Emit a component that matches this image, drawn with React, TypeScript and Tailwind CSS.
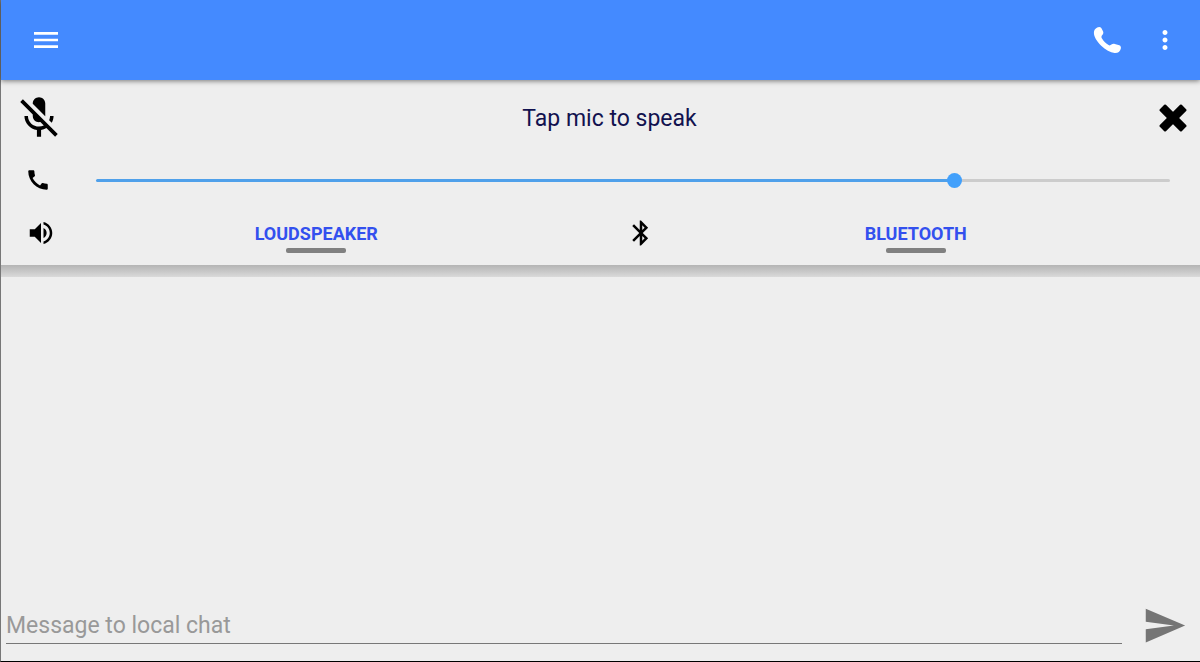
import React, { useState } from "react"
import {
  MdBluetooth,
  MdCall,
  MdMenu,
  MdMicOff,
  MdMoreVert,
  MdSend,
  MdVolumeUp
} from "react-icons/md"

const HandsetIcon = () => (
  <svg width="30" height="30" viewBox="0 0 30 30" fill="currentColor" aria-hidden="true">
    <path d="M5.2 2.6C6.6 1.6 8.4 1.7 9.3 3.1L11 6.2C11.7 7.8 11.3 8.9 10.3 9.9C9.3 11 9.2 12.3 10 13.6C11.6 16.2 14 18.6 16.6 20.1C17.6 20.7 18.6 20.4 19.4 19.6C20.4 18.7 21.6 18.5 22.8 18.9L27.3 20.3C28.8 20.9 29.2 22.2 28.8 23.8C28 26.8 26 28.2 22.6 28C18.4 27.6 13.4 25 9.2 20.8C4.6 16.2 1.9 11.6 1.9 7.8C1.9 5.4 3.2 3.6 5.2 2.6Z" />
  </svg>
)

const CloseIcon = () => (
  <svg width="28" height="28" viewBox="0 0 28 28" aria-hidden="true">
    <rect x="-1.5" y="9.7" width="31" height="8.6" rx="1.2" transform="rotate(45 14 14)" />
    <rect x="-1.5" y="9.7" width="31" height="8.6" rx="1.2" transform="rotate(-45 14 14)" />
  </svg>
)

const OutputToggle = ({ icon, label, active, onToggle }) => (
  <div className="flex flex-1 items-center pl-[25px] pr-6">
    {icon}
    <button
      onClick={onToggle}
      aria-pressed={active}
      className="flex flex-1 flex-col items-center gap-1 pt-2.5 text-lg leading-5 font-bold text-[#3350ee]">
      {label}
      <span
        className={`h-[5px] w-15 rounded-xs ${active ? "bg-[#3350ee]" : "bg-[#808080]"}`}
      />
    </button>
  </div>
)

const App = () => {
  const [volume, setVolume] = useState(804)
  const [loudspeaker, setLoudspeaker] = useState(false)
  const [bluetooth, setBluetooth] = useState(false)
  const [message, setMessage] = useState("")

  const percent = volume / 10

  return (
    <div className="flex min-h-screen flex-col border-b border-l border-b-black border-l-[#777] bg-[#eeeeee] font-[Roboto,sans-serif]">
      <header className="relative z-10 flex h-20 items-center justify-between bg-[#448aff] pl-[29px] pr-5 text-white shadow-[0_1px_5px_rgba(0,0,0,0.5)]">
        <button aria-label="Menu">
          <MdMenu size={32} />
        </button>
        <div className="flex items-center gap-7">
          <button aria-label="Call">
            <HandsetIcon />
          </button>
          <button aria-label="More options">
            <MdMoreVert size={30} />
          </button>
        </div>
      </header>

      <section className="flex flex-col">
        <div className="flex h-[76px] items-center pl-[13px] pr-[13px]">
          <button aria-label="Microphone">
            <MdMicOff size={50} />
          </button>
          <p className="flex-1 pt-0.5 pr-1 text-center text-[23px] text-[#12124f]">
            Tap mic to speak
          </p>
          <button aria-label="Close">
            <CloseIcon />
          </button>
        </div>

        <div className="flex h-12 items-center pl-6 pr-[30px]">
          <label htmlFor="volume" aria-label="Call volume" className="w-[71px]">
            <MdCall size={26} />
          </label>
          <input
            id="volume"
            type="range"
            min="0"
            max="1000"
            value={volume}
            onChange={(e) => setVolume(Number(e.target.value))}
            className="h-[3px] flex-1 appearance-none rounded-full [&::-webkit-slider-thumb]:size-[15px] [&::-webkit-slider-thumb]:appearance-none [&::-webkit-slider-thumb]:rounded-full [&::-webkit-slider-thumb]:bg-[#42a0fb]"
            style={{
              background: `linear-gradient(to right, #4fa0ea ${percent}%, #cccccc ${percent}%)`
            }}
          />
        </div>

        <div className="flex h-[58px] items-center">
          <OutputToggle
            icon={<MdVolumeUp size={30} />}
            label="LOUDSPEAKER"
            active={loudspeaker}
            onToggle={() => setLoudspeaker(!loudspeaker)}
          />
          <OutputToggle
            icon={<MdBluetooth size={30} />}
            label="BLUETOOTH"
            active={bluetooth}
            onToggle={() => setBluetooth(!bluetooth)}
          />
        </div>
      </section>
      <div className="mt-[3px] h-3 bg-linear-to-b from-[#b4b4b4] to-[#dadada]" />

      <main className="flex-1" />

      <form
        onSubmit={(e) => {
          e.preventDefault()
          setMessage("")
        }}
        className="flex items-center gap-5 pb-[13px] pl-[5px] pr-[13px]">
        <input
          type="text"
          aria-label="Message to local chat"
          value={message}
          onChange={(e) => setMessage(e.target.value)}
          className="h-9 min-w-0 flex-1 border-b border-[#777] text-[23px] outline-none placeholder:text-[#999]"
          placeholder="Message to local chat"
        />
        <button aria-label="Send" className="text-[#757575]">
          <MdSend size={45} />
        </button>
      </form>
    </div>
  )
}

export default App
